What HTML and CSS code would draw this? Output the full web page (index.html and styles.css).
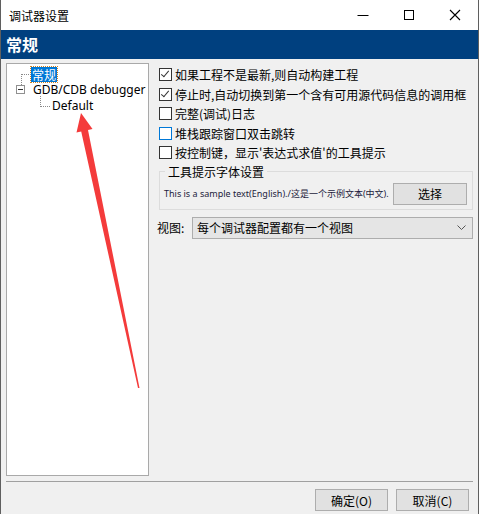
FILE: index.html
```html
<!DOCTYPE html>
<html lang="zh-CN">
<head>
  <meta charset="UTF-8">
  <title>调试器设置</title>
  <link rel="stylesheet" href="styles.css">
</head>
<body>
  <div class="window">
    <div class="titlebar">
      <span class="title">调试器设置</span>
      <div class="controls">
        <span class="ctl"><svg width="12" height="12" viewBox="0 0 12 12"><path d="M0.5 6.5h11" stroke="#000" stroke-width="1"/></svg></span>
        <span class="ctl"><svg width="12" height="12" viewBox="0 0 12 12"><rect x="1.5" y="1.5" width="9" height="9" fill="none" stroke="#000"/></svg></span>
        <span class="ctl"><svg width="12" height="12" viewBox="0 0 12 12"><path d="M1 1L11 11M11 1L1 11" stroke="#000" stroke-width="1.1"/></svg></span>
      </div>
    </div>

    <div class="header">常规</div>

    <div class="content">
      <div class="tree">
        <div class="node lvl0"><span class="sel">常规</span></div>
        <div class="node lvl0 parent"><span class="expander"></span><span>GDB/CDB debugger</span></div>
        <div class="node lvl1">Default</div>
      </div>

      <div class="panel">
        <label class="check"><span class="box checked"></span>如果工程不是最新,则自动构建工程</label>
        <label class="check"><span class="box checked"></span>停止时,自动切换到第一个含有可用源代码信息的调用框</label>
        <label class="check"><span class="box"></span>完整(调试)日志</label>
        <label class="check"><span class="box hover"></span>堆栈跟踪窗口双击跳转</label>
        <label class="check"><span class="box"></span>按控制键，显示'表达式求值'的工具提示</label>

        <fieldset class="group">
          <legend>工具提示字体设置</legend>
          <div class="group-row">
            <span class="sample">This is a sample text(English)./这是一个示例文本(中文).</span>
            <button class="btn">选择</button>
          </div>
        </fieldset>

        <div class="view-row">
          <span class="view-label">视图:</span>
          <div class="combo">
            <span>每个调试器配置都有一个视图</span>
            <svg width="9" height="5" viewBox="0 0 9 5"><path d="M0.5 0.5L4.5 4.5L8.5 0.5" fill="none" stroke="#555"/></svg>
          </div>
        </div>
      </div>
    </div>

    <div class="separator"></div>

    <div class="footer">
      <button class="btn wide">确定(O)</button>
      <button class="btn wide">取消(C)</button>
    </div>

    <svg class="arrow" width="479" height="514" viewBox="0 0 479 514">
      <polygon points="81,113 92.5,129 88,130 139.5,388 138,388 81.2,131.5 76.5,132.5" fill="#f43b3b"/>
    </svg>
  </div>
</body>
</html>
```

FILE: styles.css
```css
body {
  margin: 0;
  font-family: "Noto Sans", "Noto Sans CJK SC", sans-serif;
  font-size: 12px;
  color: #000;
  background: #f0f0f0;
}
.window {
  position: relative;
  width: 479px;
  height: 514px;
  box-sizing: border-box;
  border-left: 1px solid #5f5f5f;
  border-right: 1px solid #5f5f5f;
  background: #f0f0f0;
  overflow: hidden;
}
.titlebar {
  height: 30px;
  background: #fff;
  display: flex;
  align-items: center;
  justify-content: space-between;
}
.title {
  margin-left: 8px;
  font-family: "Noto Sans CJK SC", sans-serif;
  font-size: 12px;
}
.controls {
  display: flex;
  height: 30px;
}
.ctl {
  width: 46px;
  display: flex;
  align-items: center;
  justify-content: center;
}
.header {
  height: 29px;
  background: #00407f;
  color: #fff;
  font-family: "Noto Sans CJK SC", sans-serif;
  font-weight: bold;
  font-size: 16px;
  line-height: 28px;
  padding-left: 5px;
}
.content {
  display: flex;
  padding: 4px 5px 0 5px;
}
.tree {
  width: 141px;
  height: 409px;
  background: #fff;
  border: 1px solid #a9a9a9;
  padding-top: 2px;
  box-sizing: content-box;
  flex-shrink: 0;
}
.node {
  position: relative;
  height: 16px;
  line-height: 16px;
  white-space: nowrap;
  display: flex;
  align-items: center;
}
.lvl0 {
  padding-left: 24px;
}
.lvl1 {
  padding-left: 45px;
}
.sel {
  background: #0078d7;
  color: #fff;
  padding: 0 1px;
  outline: 1px dotted #d08020;
  font-family: "Noto Sans CJK SC", sans-serif;
  line-height: 15px;
}
.node:first-child::before {
  content: "";
  position: absolute;
  left: 14px;
  top: 8px;
  width: 9px;
  height: 12px;
  border-top: 1px dotted #8a8a8a;
  border-left: 1px dotted #8a8a8a;
}
.parent {
  padding-left: 26px;
}
.expander {
  position: absolute;
  left: 9px;
  top: 3px;
  width: 9px;
  height: 9px;
  box-sizing: border-box;
  border: 1px solid #909090;
  background: #fff;
}
.expander::after {
  content: "";
  position: absolute;
  left: 1px;
  top: 3px;
  width: 5px;
  height: 1px;
  background: #333;
}
.lvl1::before {
  content: "";
  position: absolute;
  left: 33px;
  top: -2px;
  width: 9px;
  height: 10px;
  border-left: 1px dotted #8a8a8a;
  border-bottom: 1px dotted #8a8a8a;
}
.panel {
  margin-left: 10px;
  padding-top: 2px;
  flex: 1;
  min-width: 0;
  display: flex;
  flex-direction: column;
}
.check {
  display: flex;
  align-items: center;
  height: 19.5px;
  white-space: nowrap;
  font-family: "Noto Sans CJK SC", sans-serif;
}
.box {
  width: 13px;
  height: 13px;
  box-sizing: border-box;
  border: 1px solid #333;
  background: #fff;
  margin-right: 3px;
  flex-shrink: 0;
  position: relative;
}
.box.hover {
  border-color: #0078d7;
}
.box.checked::after {
  content: "";
  position: absolute;
  left: 3px;
  top: 0px;
  width: 3px;
  height: 7px;
  border-right: 1px solid #333;
  border-bottom: 1px solid #333;
  transform: rotate(40deg);
}
.group {
  margin: 1px 0 0 0;
  padding: 3px 5px 4px 4px;
  border: 1px solid #dcdcdc;
  min-width: 0;
}
.group legend {
  padding: 0 3px;
  margin-left: 1px;
  line-height: 16px;
  font-family: "Noto Sans CJK SC", sans-serif;
}
.group-row {
  display: flex;
  align-items: center;
  justify-content: space-between;
}
.sample {
  font-family: "Noto Sans", "Noto Sans CJK SC", sans-serif;
  font-size: 9px;
  color: #1c1c3c;
  white-space: nowrap;
}
.btn {
  background: #e1e1e1;
  border: 1px solid #adadad;
  font-family: "Noto Sans CJK SC", sans-serif;
  font-size: 12px;
  width: 74px;
  height: 22px;
  padding: 0;
  color: #000;
  flex-shrink: 0;
}
.view-row {
  display: flex;
  align-items: center;
  margin-top: 7px;
  margin-left: -2px;
}
.view-label {
  width: 35px;
  font-family: "Noto Sans CJK SC", sans-serif;
}
.combo {
  flex: 1;
  height: 22px;
  box-sizing: border-box;
  background: #e5e5e5;
  border: 1px solid #adadad;
  display: flex;
  align-items: center;
  justify-content: space-between;
  padding: 0 6px 0 4px;
  font-family: "Noto Sans CJK SC", sans-serif;
}
.separator {
  height: 1px;
  background: #a0a0a0;
  margin: 5px 5px 0 5px;
}
.footer {
  display: flex;
  justify-content: flex-end;
  gap: 8px;
  padding: 7px 9px 0 0;
}
.btn.wide {
  width: 73px;
}
.arrow {
  position: absolute;
  left: -1px;
  top: 0;
  pointer-events: none;
}
```
